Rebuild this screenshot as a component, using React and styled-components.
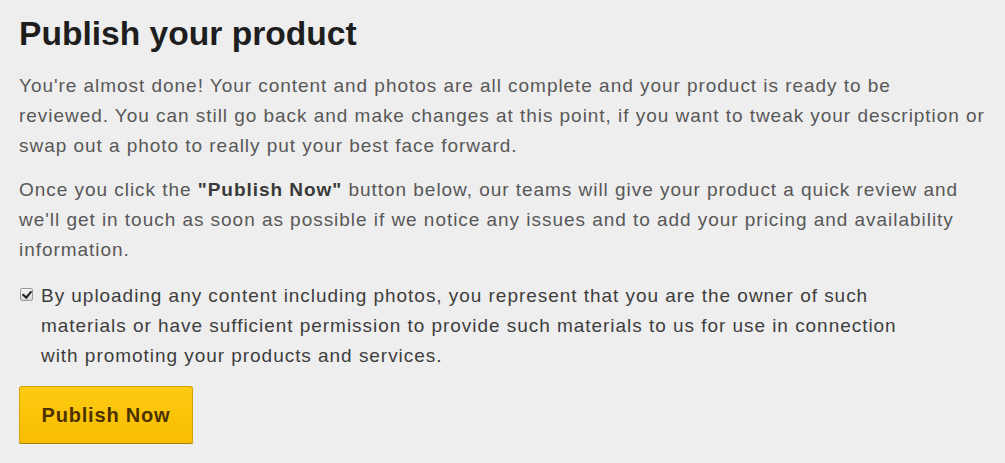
import React from 'react'
import styled, {createGlobalStyle} from 'styled-components'

const Global = createGlobalStyle`
  html, body {
    margin: 0;
    padding: 0;
    background: #eeeeee;
  }
  body {
    font-family: "Liberation Sans", Arial, sans-serif;
  }
`

const Page = styled.div`
  padding: 14px 16px 0 19px;
`

const Title = styled.h1`
  margin: 0 0 17px 0;
  font-size: 33.6px;
  line-height: 40px;
  font-weight: bold;
  color: #1e1e1e;
`

const Text = styled.p`
  margin: 0 0 14px 0;
  font-size: 19px;
  letter-spacing: 0.96px;
  line-height: 30px;
  color: #585858;
  strong {
    color: #3a3a3a;
  }
`

const Agree = styled.label`
  display: flex;
  align-items: flex-start;
  gap: 8px;
  margin: 16px 0 15px 1px;
  font-size: 19px;
  letter-spacing: 0.96px;
  line-height: 30px;
  color: #3d3d3d;
  cursor: pointer;
  span {
    max-width: 880px;
  }
`

const Box = styled.input`
  appearance: none;
  flex: none;
  width: 13px;
  height: 13px;
  margin: 7px 0 0 0;
  border: 1px solid #9a9a9a;
  border-radius: 2px;
  background: linear-gradient(#f4f4f4, #d8d8d8);
  position: relative;
  &:checked::after {
    content: '';
    position: absolute;
    left: 3px;
    top: 0px;
    width: 4px;
    height: 7px;
    border: solid #222;
    border-width: 0 2px 2px 0;
    transform: rotate(40deg);
  }
`

const Button = styled.button`
  display: block;
  width: 174px;
  height: 58px;
  padding: 0;
  border: 1px solid #d4a100;
  border-bottom-color: #a88000;
  border-radius: 3px;
  background: linear-gradient(#fdcb12, #f8bd00);
  box-shadow: 0 1px 0 #b58f10;
  font-family: inherit;
  font-size: 20px;
  letter-spacing: 0.8px;
  font-weight: bold;
  color: #4b3200;
  cursor: pointer;
`

export default function App() {
  return (
    <Page>
      <Global />
      <Title>Publish your product</Title>
      <Text>
        You're almost done! Your content and photos are all complete and your product is ready to be<br />
        reviewed. You can still go back and make changes at this point, if you want to tweak your description or
        swap out a photo to really put your best face forward.
      </Text>
      <Text>
        Once you click the <strong>"Publish Now"</strong> button below, our teams will give your product a quick review and
        we'll get in touch as soon as possible if we notice any issues and to add your pricing and availability
        information.
      </Text>
      <Agree>
        <Box type="checkbox" defaultChecked />
        <span>
          By uploading any content including photos, you represent that you are the owner of such
          materials or have sufficient permission to provide such materials to us for use in connection
          with promoting your products and services.
        </span>
      </Agree>
      <Button>Publish Now</Button>
    </Page>
  )
}
